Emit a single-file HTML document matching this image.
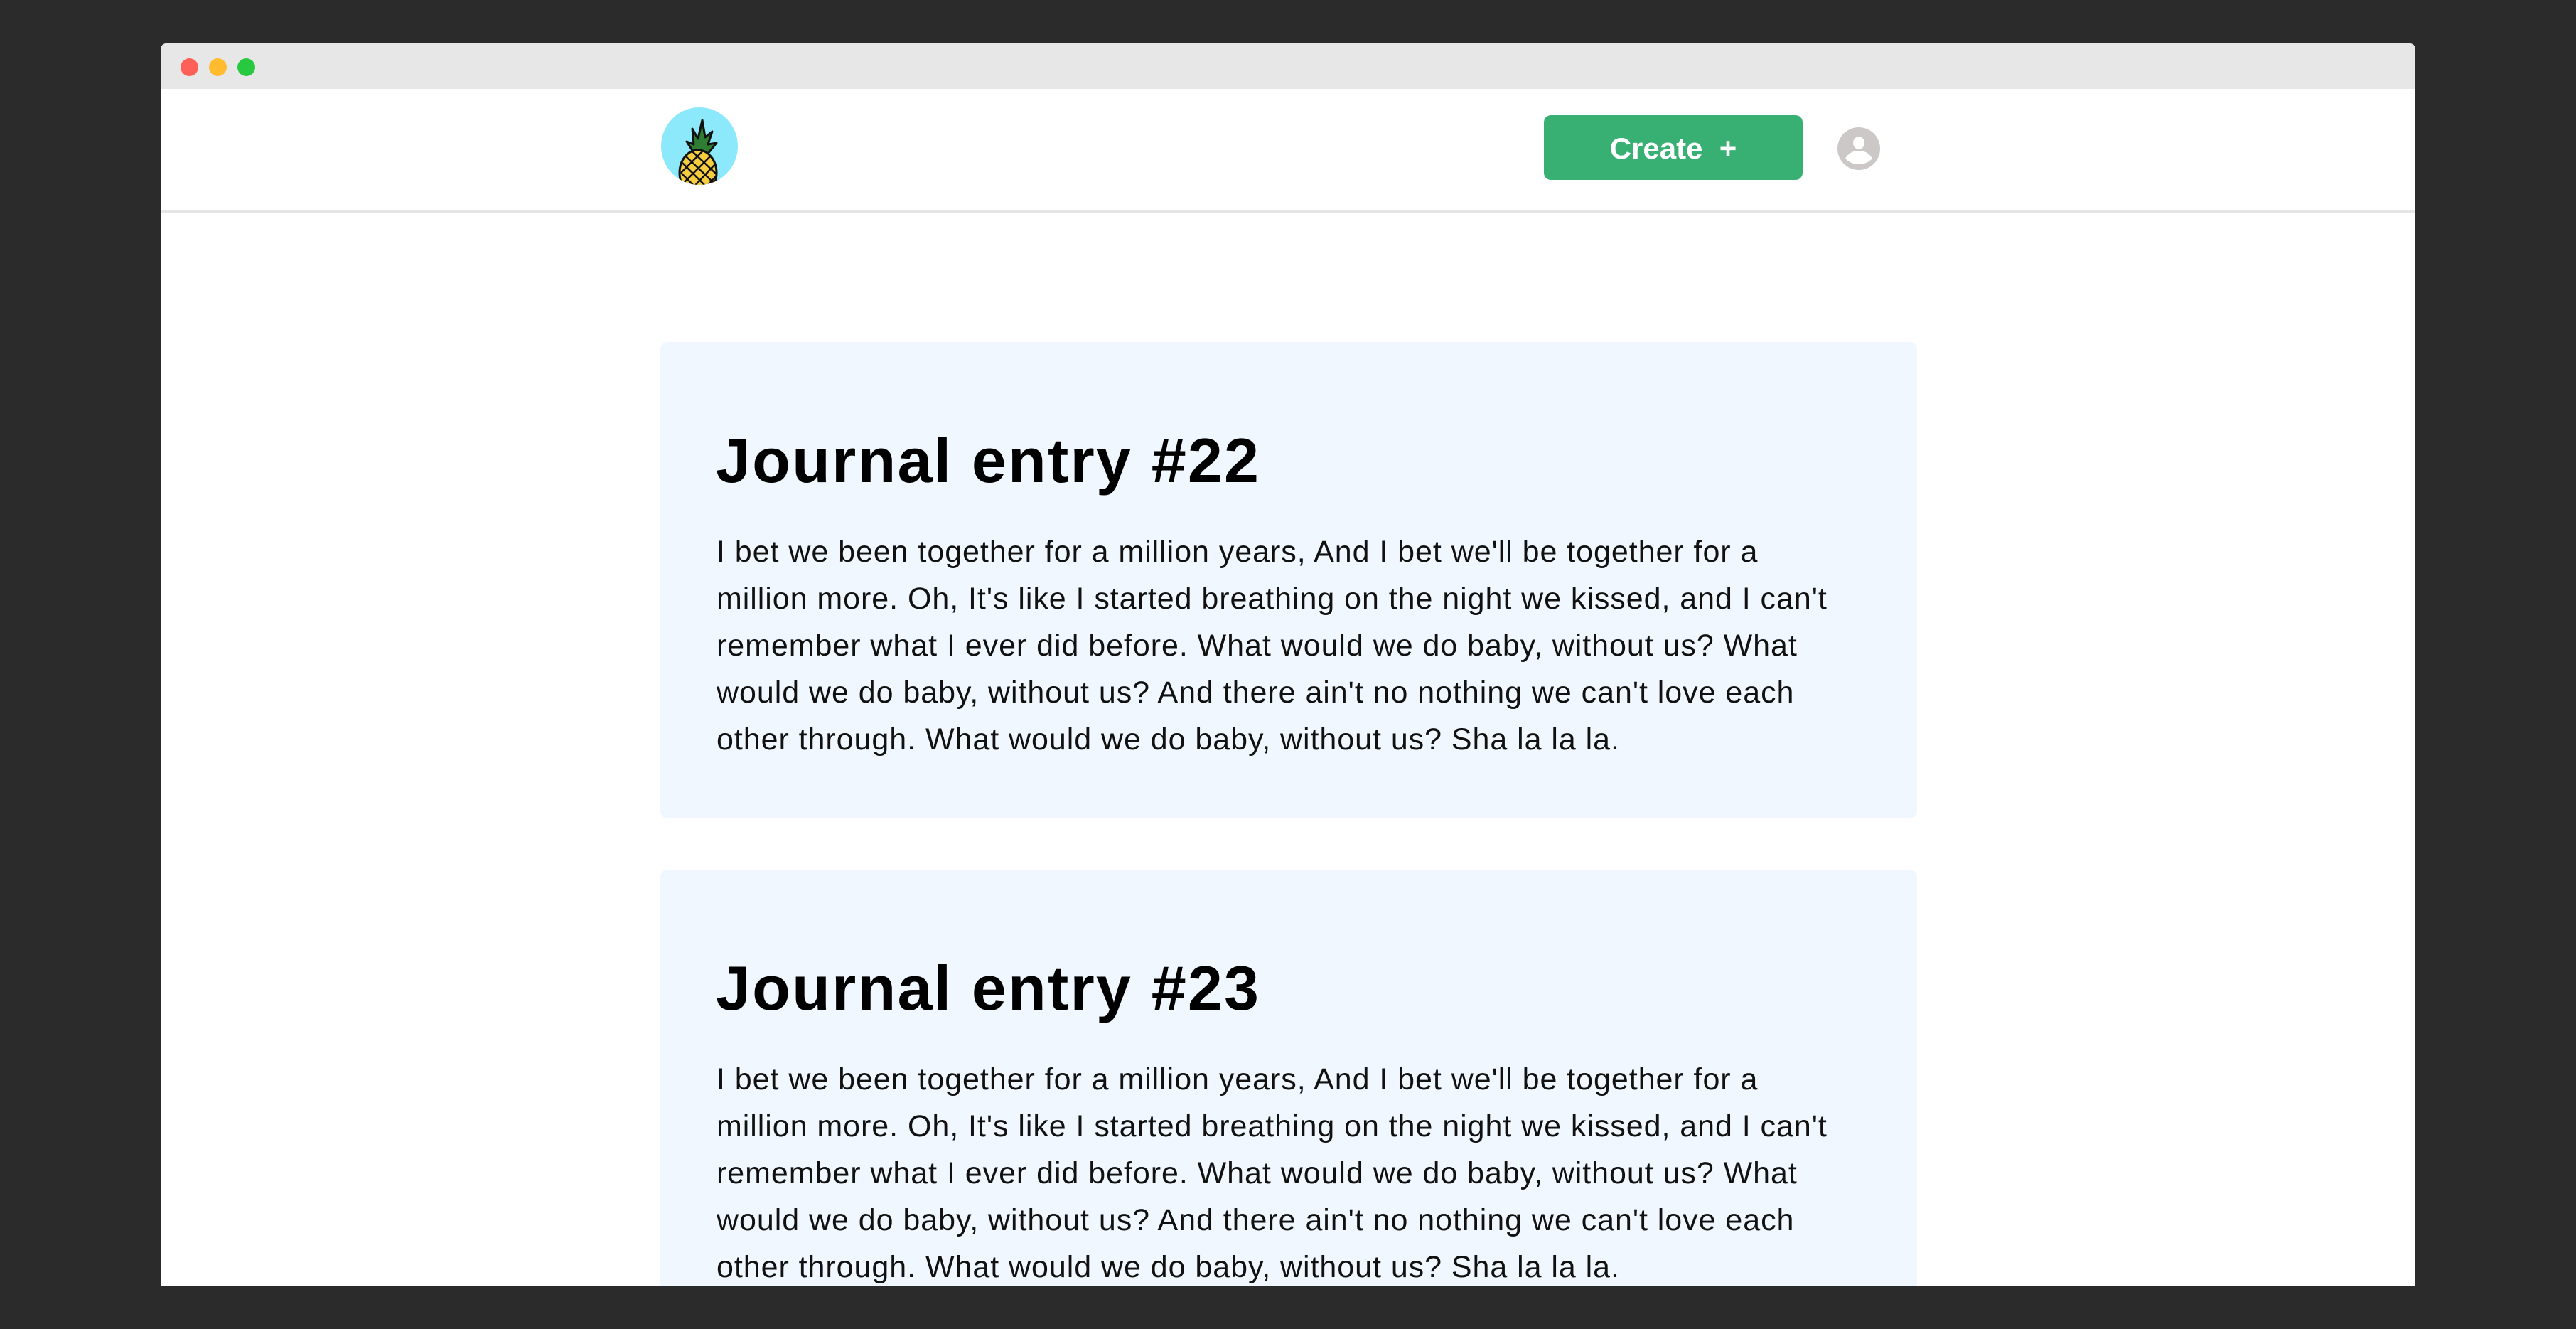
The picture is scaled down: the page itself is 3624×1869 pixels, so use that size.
<!DOCTYPE html>
<html><head><meta charset="utf-8"><style>
*{margin:0;padding:0;box-sizing:border-box}
html,body{width:3624px;height:1869px;background:#2b2b2b;overflow:hidden;font-family:"Liberation Sans",sans-serif}
.win{position:absolute;left:226px;top:61px;width:3172px;height:1747px;background:#fff;border-radius:8px 8px 0 0;overflow:hidden}
.bar{height:64px;background:#e7e7e7;position:relative}
.dot{position:absolute;top:21px;width:25px;height:25px;border-radius:50%}
.hdr{position:absolute;top:64px;left:0;right:0;height:174px;border-bottom:3px solid #e5e5e5}
.logo{position:absolute;left:704px;top:90px;width:108px;height:109px;border-radius:50%;background:#8ce8fb;overflow:hidden}
.btn{position:absolute;left:1946px;top:101px;width:364px;height:91px;background:#38b073;border-radius:10px;color:#fff;font-weight:bold;font-size:42px;text-align:center;line-height:93px}
.av{position:absolute;left:2359px;top:118px;width:60px;height:60px}
.card{position:absolute;left:703px;width:1768px;background:#f0f7fe;border-radius:10px}
.card h1{position:absolute;left:78px;top:117px;font-size:88px;font-weight:bold;color:#000;letter-spacing:2.2px;line-height:100px;white-space:nowrap}
.card p{position:absolute;left:79px;top:262px;font-size:43px;line-height:66px;color:#111;white-space:nowrap;letter-spacing:0.95px}
</style></head><body>
<div class="win">
  <div class="bar">
    <div class="dot" style="left:28px;background:#fe5f57"></div>
    <div class="dot" style="left:68px;background:#febc2e"></div>
    <div class="dot" style="left:108px;background:#28c840"></div>
  </div>
  <div class="hdr"></div>
  <div class="logo">
    <svg width="108" height="109" viewBox="0 0 108 109">
      <path d="M50 70 L36 48 L46 52 L44 30 L52 44 L58 18 L62 42 L72 34 L66 52 L78 50 L62 70 Z" fill="#2e7d32" stroke="#111" stroke-width="3" stroke-linejoin="round"/>
      <ellipse cx="52" cy="92" rx="26" ry="32" fill="#f7cd40" stroke="#111" stroke-width="3"/>
      <g stroke="#111" stroke-width="2.5" fill="none">
        <path d="M30 78 L66 114 M34 68 L76 108 M44 62 L78 94 M28 92 L54 118"/>
        <path d="M70 68 L30 108 M76 80 L40 118 M58 62 L28 92 M78 96 L58 118"/>
      </g>
    </svg>
  </div>
  <div class="btn">Create&nbsp; +</div>
  <svg class="av" viewBox="0 0 60 60"><circle cx="30" cy="30" r="30" fill="#ccc8c7"/><ellipse cx="30" cy="22" rx="8" ry="9" fill="#fff"/><path d="M11 44 Q17 33 30 33 Q43 33 49 44 Q41 52 30 52 Q19 52 11 44Z" fill="#fff"/></svg>

  <div class="card" style="top:420px;height:670px">
    <h1>Journal entry #22</h1>
    <p>I bet we been together for a million years, And I bet we'll be together for a<br>million more. Oh, It's like I started breathing on the night we kissed, and I can't<br>remember what I ever did before. What would we do baby, without us? What<br>would we do baby, without us? And there ain't no nothing we can't love each<br>other through. What would we do baby, without us? Sha la la la.</p>
  </div>
  <div class="card" style="top:1162px;height:670px">
    <h1>Journal entry #23</h1>
    <p>I bet we been together for a million years, And I bet we'll be together for a<br>million more. Oh, It's like I started breathing on the night we kissed, and I can't<br>remember what I ever did before. What would we do baby, without us? What<br>would we do baby, without us? And there ain't no nothing we can't love each<br>other through. What would we do baby, without us? Sha la la la.</p>
  </div>
</div>
</body></html>
